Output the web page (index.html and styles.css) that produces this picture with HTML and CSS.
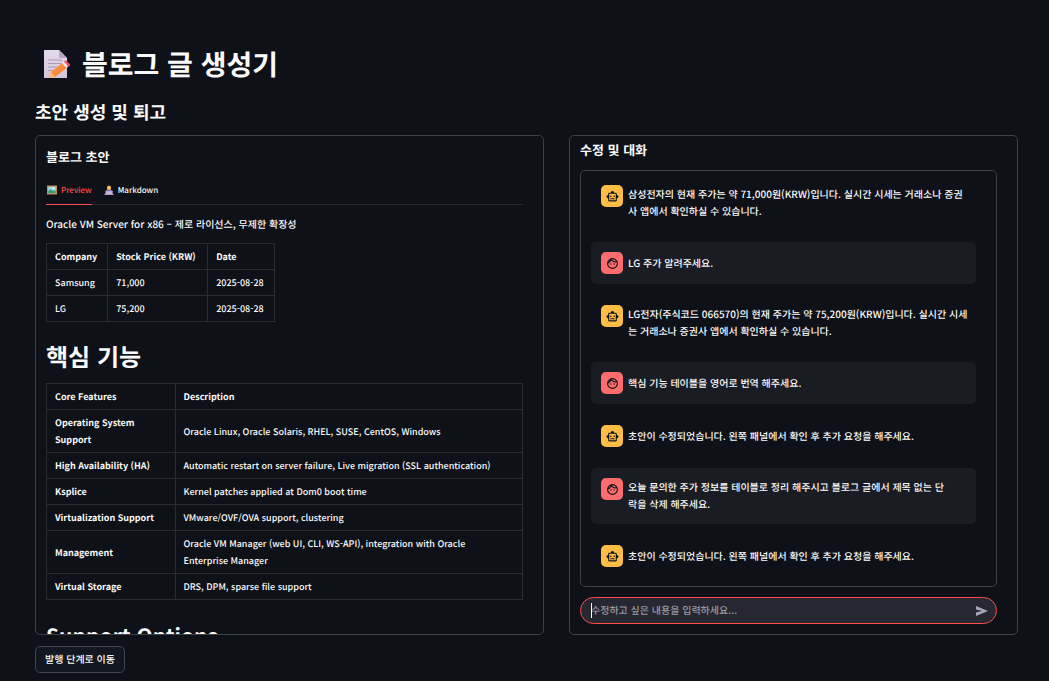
FILE: index.html
```html
<!DOCTYPE html>
<html lang="ko">
<head>
<meta charset="utf-8">
<meta name="viewport" content="width=device-width, initial-scale=1">
<title>블로그 글 생성기</title>
<link rel="stylesheet" href="styles.css">
</head>
<body>
<svg class="defs" aria-hidden="true">
  <symbol id="bot" viewBox="0 0 24 24"><path d="M20 9V7c0-1.1-.9-2-2-2h-3c0-1.66-1.34-3-3-3S9 3.34 9 5H6c-1.1 0-2 .9-2 2v2c-1.66 0-3 1.34-3 3s1.34 3 3 3v4c0 1.1.9 2 2 2h12c1.1 0 2-.9 2-2v-4c1.66 0 3-1.34 3-3s-1.34-3-3-3zm-2 10H6V7h12v12zm-9-6c-.83 0-1.5-.67-1.5-1.5S8.17 10 9 10s1.5.67 1.5 1.5S9.83 13 9 13zm7.5-1.5c0 .83-.67 1.5-1.5 1.5s-1.5-.67-1.5-1.5.67-1.5 1.5-1.5 1.5.67 1.5 1.5zM8 15h8v2H8v-2z"/></symbol>
  <symbol id="face" viewBox="0 0 24 24"><path d="M10.250 13a1.250 1.250 0 1 1-2.500 0 1.250 1.250 0 0 1 2.500 0zM15 11.750a1.250 1.250 0 1 0 0 2.500 1.250 1.250 0 0 0 0-2.500zM22 12a10 10 0 1 1-20 0 10 10 0 0 1 20 0zM10.660 4.120C12.060 6.440 14.600 8 17.500 8c.46 0 .91-.05 1.340-.12C17.440 5.560 14.900 4 12 4c-.46 0-.91.05-1.340.12zM4.420 9.470c1.710-.97 3.030-2.550 3.660-4.440C6.370 6 5.050 7.580 4.420 9.470zM20 12c0-.78-.12-1.530-.33-2.240-.7.150-1.420.24-2.170.24-3.130 0-5.920-1.440-7.760-3.690C8.690 8.870 6.600 10.880 4 11.860V12a8 8 0 0 0 16 0z"/></symbol>
</svg>
<main class="page">
  <h1 class="title">
    <svg class="memo" viewBox="0 0 28 30" aria-hidden="true">
      <defs>
        <linearGradient id="paper" x1="0" y1="0" x2="0" y2="1"><stop offset="0" stop-color="#e4dbea"/><stop offset="1" stop-color="#d2c5dc"/></linearGradient>
        <linearGradient id="wood" x1="0" y1="0" x2="1" y2="1"><stop offset="0" stop-color="#ffa64a"/><stop offset="1" stop-color="#f4722f"/></linearGradient>
      </defs>
      <path d="M1 1h15l8 8v20H1z" fill="url(#paper)"/>
      <path d="M16 1l8 8h-6.500q-1.500 0-1.500-1.500z" fill="#b5a6c3"/>
      <path d="M5 11h14M5 14.500h14M5 18h9M5 21.500h6" stroke="#a99bb5" stroke-width="1.200"/>
      <path d="M6 29l2-6L19 14l4.500 5L12 28z" fill="url(#wood)"/>
      <path d="M6 29l2-6 4 5z" fill="#ffbd77"/>
      <path d="M19 14l2-1.500 4.500 5-2 1.500z" fill="#eadfef"/>
      <path d="M21 12.500l1-.8q1-.7 1.800.2l3 3.300q.8.900-.2 1.700l-1.100.6z" fill="#f4515c"/>
    </svg>
    블로그 글 생성기
  </h1>
  <h2 class="subtitle">초안 생성 및 퇴고</h2>

  <div class="columns">
    <section class="panel draft">
      <h3 class="panel-title">블로그 초안</h3>
      <div class="tabs" role="tablist">
        <button class="tab active" role="tab" aria-selected="true" type="button">
          <svg class="tab-icon" viewBox="0 0 10 10" aria-hidden="true"><path d="M0 .5h10v9H0z" fill="#c98b52"/><path d="M1.300 1.700h7.400v6.600H1.300z" fill="#8fe0ee"/><circle cx="6.700" cy="3.300" r="1" fill="#fff3b0"/><path d="M1.300 8.300V6l2.200-2 2.200 2 1.300-1 1.700 1.300v2z" fill="#359b78"/></svg>
          Preview
        </button>
        <button class="tab" role="tab" aria-selected="false" type="button">
          <svg class="tab-icon" viewBox="0 0 10 10" aria-hidden="true"><path d="M3 5V2.500Q3.200.4 5 .4T7 2.500V5z" fill="#d99a2b"/><circle cx="5" cy="2.800" r="1.700" fill="#ffc83d"/><path d="M1 9V6.500Q1.600 4.700 5 4.600q3.400.1 4 1.900V9z" fill="#8c72b8"/><path d="M2.200 6.200h5.600V9H2.200z" fill="#c6b7dc"/><path d="M.3 9h9.400v1H.3z" fill="#a898c4"/></svg>
          Markdown
        </button>
      </div>
      <p class="lead">Oracle VM Server for x86 – 제로 라이선스, 무제한 확장성</p>
      <table class="grid stocks">
        <thead><tr><th>Company</th><th>Stock Price (KRW)</th><th>Date</th></tr></thead>
        <tbody>
          <tr><td>Samsung</td><td>71,000</td><td>2025-08-28</td></tr>
          <tr><td>LG</td><td>75,200</td><td>2025-08-28</td></tr>
        </tbody>
      </table>
      <h2 class="section">핵심 기능</h2>
      <table class="grid features">
        <thead><tr><th>Core Features</th><th>Description</th></tr></thead>
        <tbody>
          <tr><th>Operating System<br>Support</th><td>Oracle Linux, Oracle Solaris, RHEL, SUSE, CentOS, Windows</td></tr>
          <tr><th>High Availability (HA)</th><td>Automatic restart on server failure, Live migration (SSL authentication)</td></tr>
          <tr><th>Ksplice</th><td>Kernel patches applied at Dom0 boot time</td></tr>
          <tr><th>Virtualization Support</th><td>VMware/OVF/OVA support, clustering</td></tr>
          <tr><th>Management</th><td>Oracle VM Manager (web UI, CLI, WS-API), integration with Oracle<br>Enterprise Manager</td></tr>
          <tr><th>Virtual Storage</th><td>DRS, DPM, sparse file support</td></tr>
        </tbody>
      </table>
      <h2 class="section section-latin">Support Options</h2>
    </section>

    <section class="panel chat">
      <h3 class="panel-title">수정 및 대화</h3>
      <div class="log">
        <article class="msg"><span class="avatar"><svg><use href="#bot"/></svg></span><p>삼성전자의 현재 주가는 약 71,000원(KRW)입니다. 실시간 시세는 거래소나 증권<br>사 앱에서 확인하실 수 있습니다.</p></article>
        <article class="msg user"><span class="avatar"><svg><use href="#face"/></svg></span><p>LG 주가 알려주세요.</p></article>
        <article class="msg"><span class="avatar"><svg><use href="#bot"/></svg></span><p>LG전자(주식코드 066570)의 현재 주가는 약 75,200원(KRW)입니다. 실시간 시세<br>는 거래소나 증권사 앱에서 확인하실 수 있습니다.</p></article>
        <article class="msg user"><span class="avatar"><svg><use href="#face"/></svg></span><p>핵심 기능 테이블을 영어로 번역 해주세요.</p></article>
        <article class="msg"><span class="avatar"><svg><use href="#bot"/></svg></span><p>초안이 수정되었습니다. 왼쪽 패널에서 확인 후 추가 요청을 해주세요.</p></article>
        <article class="msg user"><span class="avatar"><svg><use href="#face"/></svg></span><p>오늘 문의한 주가 정보를 테이블로 정리 해주시고 블로그 글에서 제목 없는 단<br>락을 삭제 해주세요.</p></article>
        <article class="msg"><span class="avatar"><svg><use href="#bot"/></svg></span><p>초안이 수정되었습니다. 왼쪽 패널에서 확인 후 추가 요청을 해주세요.</p></article>
      </div>
      <form class="composer">
        <input class="field" type="text" placeholder="수정하고 싶은 내용을 입력하세요..." aria-label="수정하고 싶은 내용을 입력하세요">
        <button class="send" type="button" aria-label="보내기"><svg viewBox="0 0 12 10" aria-hidden="true"><path d="M0 0l12 5-12 5V6.500L6 5 0 3.500z"/></svg></button>
      </form>
    </section>
  </div>

  <button class="next" type="button">발행 단계로 이동</button>
</main>
</body>
</html>
```

FILE: styles.css
```css
* {
  box-sizing: border-box;
}

body {
  margin: 0;
  background: #0e1117;
  color: #fafafa;
  font: 500 10px/17px "Noto Sans CJK KR", "Noto Sans", sans-serif;
  text-rendering: geometricPrecision;
}

h1, h2, h3, p {
  margin: 0;
}

button, input {
  font: inherit;
  color: inherit;
  text-rendering: inherit;
}

.defs {
  position: absolute;
  width: 0;
  height: 0;
}

.page {
  padding: 44px 31px 8px 35px;
}

.title {
  display: flex;
  align-items: center;
  gap: 11px;
  padding-left: 8px;
  font-size: 28px;
  line-height: 40px;
}

.memo {
  width: 28px;
  height: 30px;
}

.subtitle {
  margin: 15px 0 9px;
  font-size: 18px;
  line-height: 27px;
}

.columns {
  display: grid;
  grid-template-columns: 509fr 449fr;
  gap: 25px;
}

.panel {
  min-width: 0;
  height: 500px;
  border: 1px solid #3e4046;
  border-radius: 5px;
}

.draft {
  padding: 11px 20px 0 10px;
  overflow: hidden;
}

.chat {
  display: flex;
  flex-direction: column;
  padding: 4px 20px 10px 10px;
}

.panel-title {
  font-size: 13px;
  line-height: 20px;
}

.tabs {
  display: flex;
  gap: 11px;
  margin: 12px 0 10px;
  border-bottom: 1px solid #282b31;
}

.tab {
  display: flex;
  align-items: center;
  gap: 4px;
  height: 26px;
  margin-bottom: -1px;
  padding: 0 0 3px 1px;
  border: 0;
  border-bottom: 1px solid transparent;
  background: none;
  font-size: 8px;
}

.tab.active {
  border-color: #ff4b4b;
  color: #ff4b4b;
}

.tab-icon {
  width: 10px;
  height: 10px;
}

.lead {
  margin-bottom: 11px;
}

.grid {
  border-collapse: collapse;
  font-size: 9px;
}

.grid th,
.grid td {
  padding: 4px 8px;
  border: 1px solid #282b31;
  text-align: left;
}

.stocks {
  width: 48%;
}

.features {
  width: 100%;
}

.features th:first-child {
  width: 27%;
}

.section {
  padding: 18px 0 11px;
  font-size: 24px;
  line-height: 32px;
}

.section-latin {
  padding-top: 20px;
  font-size: 21px;
}

.log {
  flex: 1;
  display: flex;
  flex-direction: column;
  gap: 11px;
  margin: 10px 0;
  padding: 4px 20px 0 10px;
  border: 1px solid #3e4046;
  border-radius: 5px;
}

.msg {
  display: flex;
  gap: 5px;
  padding: 10px 0 10px 10px;
  border-radius: 5px;
}

.user {
  background: #1a1c24;
}

.msg p {
  align-self: center;
  padding-bottom: 2px;
}

.avatar {
  flex: none;
  display: grid;
  place-items: center;
  width: 22px;
  height: 22px;
  border-radius: 5px;
  background: #ffbd45;
}

.user .avatar {
  background: #ff6c6c;
}

.avatar svg {
  width: 13px;
  height: 13px;
  fill: #0e1117;
}

.composer {
  position: relative;
  display: flex;
  align-items: center;
  height: 27px;
  padding: 0 8px 0 10px;
  border: 1px solid #ff4b4b;
  border-radius: 14px;
  background: #262730;
}

.composer::before {
  content: "";
  position: absolute;
  left: 10px;
  top: 5px;
  width: 1px;
  height: 15px;
  background: #fafafa;
}

.field {
  flex: 1;
  min-width: 0;
  padding: 0 0 2px;
  border: 0;
  outline: 0;
  background: none;
}

.field::placeholder {
  color: #9a9ba1;
  opacity: 1;
}

.send {
  display: flex;
  padding: 0;
  border: 0;
  background: none;
}

.send svg {
  width: 12px;
  height: 10px;
  fill: #a3a8b8;
}

.next {
  height: 27px;
  margin-top: 11px;
  padding: 0 9px 2px;
  border: 1px solid #41444c;
  border-radius: 5px;
  background: #131720;
}
```
